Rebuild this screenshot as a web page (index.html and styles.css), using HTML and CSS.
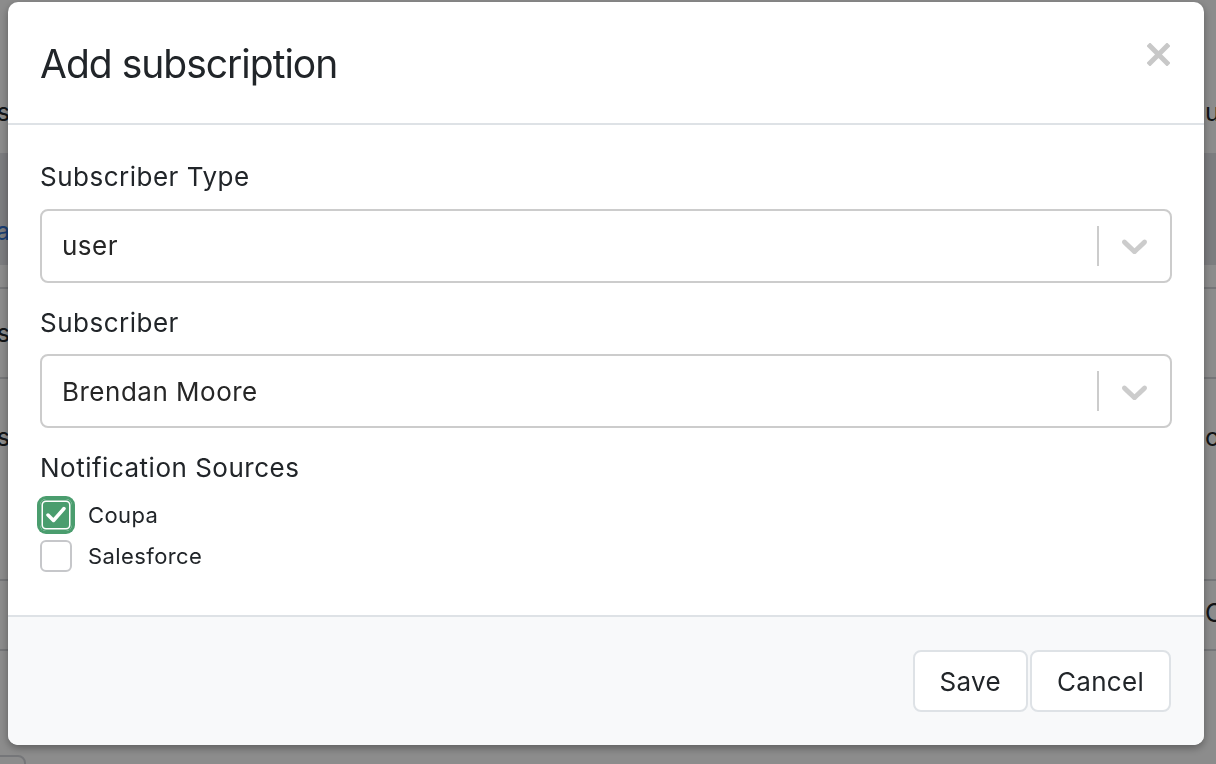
FILE: index.html
```html
<!DOCTYPE html>
<html lang="en">
<head>
<meta charset="utf-8">
<title>Add subscription</title>
<link rel="stylesheet" href="styles.css">
</head>
<body>
<div class="page">
  <div class="row row-head"><div class="l">Subscribers</div><div class="r">ubscriptions</div></div>
  <div class="row row-band"><div class="l link">Data</div><div class="r"></div></div>
  <div class="row row-gap"><div class="l"></div><div class="r"></div></div>
  <div class="row row-3"><div class="l">Users</div><div class="r"></div></div>
  <div class="row row-4"><div class="l">Managers</div><div class="r">occurrences</div></div>
  <div class="row row-5"><div class="l"></div><div class="r">Coupa</div></div>
  <div class="row row-6"><div class="l"><span class="ghost-btn"></span></div><div class="r"></div></div>
</div>

<div class="backdrop"></div>

<div class="modal">
  <div class="modal-header">
    <h4 class="modal-title">Add subscription</h4>
    <svg class="close" width="23" height="23" viewBox="0 0 23 23" aria-label="Close">
      <path d="M3 3 L20 20 M20 3 L3 20" stroke="#c8c8c8" stroke-width="5" stroke-linecap="square" fill="none"/>
    </svg>
  </div>
  <div class="modal-body">
    <div class="group">
      <div class="label">Subscriber Type</div>
      <div class="select">
        <div class="value">user</div>
        <span class="sep"></span>
        <div class="indicator">
          <svg width="43" height="43" viewBox="0 0 20 20"><path fill="#cccccc" d="M4.516 7.548c0.436-0.446 1.043-0.481 1.576 0l3.908 3.747 3.908-3.747c0.533-0.481 1.141-0.446 1.574 0 0.436 0.445 0.408 1.197 0 1.615-0.406 0.418-4.695 4.502-4.695 4.502-0.217 0.223-0.502 0.335-0.787 0.335s-0.57-0.112-0.789-0.335c0 0-4.287-4.084-4.695-4.502s-0.436-1.170 0-1.615z"/></svg>
        </div>
      </div>
    </div>
    <div class="group">
      <div class="label">Subscriber</div>
      <div class="select">
        <div class="value">Brendan Moore</div>
        <span class="sep"></span>
        <div class="indicator">
          <svg width="43" height="43" viewBox="0 0 20 20"><path fill="#cccccc" d="M4.516 7.548c0.436-0.446 1.043-0.481 1.576 0l3.908 3.747 3.908-3.747c0.533-0.481 1.141-0.446 1.574 0 0.436 0.445 0.408 1.197 0 1.615-0.406 0.418-4.695 4.502-4.695 4.502-0.217 0.223-0.502 0.335-0.787 0.335s-0.57-0.112-0.789-0.335c0 0-4.287-4.084-4.695-4.502s-0.436-1.170 0-1.615z"/></svg>
        </div>
      </div>
    </div>
    <div class="label plain">Notification Sources</div>
    <div class="checks">
      <div class="check">
        <span class="cb checked">
          <svg width="32" height="32" viewBox="0 0 32 32"><path d="M8 16 L13.5 21.5 L24 9.5" stroke="#fff" stroke-width="3.5" stroke-linecap="round" stroke-linejoin="round" fill="none"/></svg>
        </span>
        <span class="check-label">Coupa</span>
      </div>
      <div class="check">
        <span class="cb"></span>
        <span class="check-label">Salesforce</span>
      </div>
    </div>
  </div>
  <div class="modal-footer">
    <button class="btn">Save</button>
    <button class="btn">Cancel</button>
  </div>
</div>
</body>
</html>
```
FILE: styles.css
```css
html, body {
  margin: 0;
  padding: 0;
}
body {
  width: 1216px;
  height: 764px;
  overflow: hidden;
  font-family: "Inter", "Liberation Sans", sans-serif;
  color: #212529;
  background: #ffffff;
}

/* background page (under the backdrop) */
.page {
  display: flex;
  flex-direction: column;
  width: 1216px;
}
.row {
  display: flex;
  justify-content: space-between;
  font-size: 25px;
  line-height: 25px;
  color: #212529;
}
.row .l {
  width: 10px;
  display: flex;
  justify-content: flex-end;
  white-space: nowrap;
}
.row .r {
  width: 11px;
  white-space: nowrap;
  overflow: visible;
}
.row-head { height: 153px; }
.row-head .l, .row-head .r { padding-top: 100px; }
.row-band { height: 112px; background: #e2e3e8; }
.row-band .l { padding-top: 66px; }
.link { color: #2f6fd0; }
.row-gap { height: 22px; border-bottom: 2px solid #d6d8dc; }
.row-3 { height: 88px; border-bottom: 2px solid #d6d8dc; }
.row-3 .l { padding-top: 32px; }
.row-4 { height: 200px; border-bottom: 2px solid #d6d8dc; }
.row-4 .l, .row-4 .r { padding-top: 46px; }
.row-5 { height: 68px; border-bottom: 2px solid #d6d8dc; }
.row-5 .r { padding-top: 20px; }
.row-6 { height: 120px; }
.row-6 .l { padding-top: 104px; }
.ghost-btn {
  display: block;
  width: 40px;
  height: 30px;
  margin-right: -16px;
  border: 2px solid #d6d8dc;
  border-radius: 8px;
  flex: none;
}

.backdrop {
  position: fixed;
  inset: 0;
  background: rgba(0, 0, 0, 0.45);
}

/* modal */
.modal {
  position: fixed;
  left: 8px;
  top: 2px;
  width: 1196px;
  height: 743px;
  background: #ffffff;
  border-radius: 10px;
  overflow: hidden;
  display: flex;
  flex-direction: column;
  box-shadow: 0 3px 8px rgba(0, 0, 0, 0.35);
}
.modal-header {
  flex: none;
  box-sizing: border-box;
  border-bottom: 2px solid #dee2e6;
  height: 123px;
  display: flex;
  align-items: flex-start;
  justify-content: space-between;
  padding: 38px 34px 0 32px;
}
.modal-title {
  margin: 0;
  font-size: 39px;
  line-height: 48px;
  letter-spacing: -1px;
  font-weight: 400;
  color: #212529;
}
.close {
  margin-top: 3px;
  display: block;
}

.modal-body {
  flex: 1;
  padding: 34px 32px 0 32px;
}
.group {
  margin-bottom: 22px;
}
.label {
  font-size: 26px;
  letter-spacing: 0.5px;
  line-height: 36px;
  margin-bottom: 13.5px;
}
.label.plain {
  margin-bottom: 0;
}
.select {
  box-sizing: border-box;
  height: 74px;
  border: 2px solid #cccccc;
  border-radius: 8px;
  display: flex;
  align-items: center;
  background: #fff;
}
.value {
  flex: 1;
  padding-left: 20px;
  font-size: 26px;
  letter-spacing: 0.5px;
  color: #262626;
}
.sep {
  width: 2px;
  height: 40px;
  background: #cccccc;
  flex: none;
}
.indicator {
  display: flex;
  align-items: center;
  padding: 0 14px 0 14px;
}
.indicator svg { display: block; }

.checks {
  margin-top: 8px;
  display: flex;
  flex-direction: column;
}
.check {
  height: 41px;
  display: flex;
  align-items: center;
  gap: 16px;
}
.cb {
  box-sizing: border-box;
  width: 32px;
  height: 32px;
  border: 2px solid #c6c7ca;
  border-radius: 6px;
  background: #fff;
  flex: none;
  display: block;
}
.cb.checked {
  border: none;
  background: #4a9d6e;
  box-shadow: inset 0 0 0 1.5px #4a9d6e, inset 0 0 0 3px #ffffff, 0 0 0 3px #4a9d6e;
}
.cb svg { display: block; }
.check-label {
  font-size: 22px;
  letter-spacing: 0.4px;
}

.modal-footer {
  height: 130px;
  flex: none;
  box-sizing: border-box;
  border-top: 2px solid #dee2e6;
  background: #f8f9fa;
  display: flex;
  justify-content: flex-end;
  align-items: flex-start;
  gap: 2px;
  padding: 33px 33px 0 0;
}
.btn {
  box-sizing: border-box;
  height: 62px;
  padding: 0 25px;
  border: 2px solid #dee2e6;
  border-radius: 8px;
  background: #ffffff;
  font-family: "Inter", "Liberation Sans", sans-serif;
  font-size: 26px;
  letter-spacing: 0.3px;
  color: #212529;
}
```
